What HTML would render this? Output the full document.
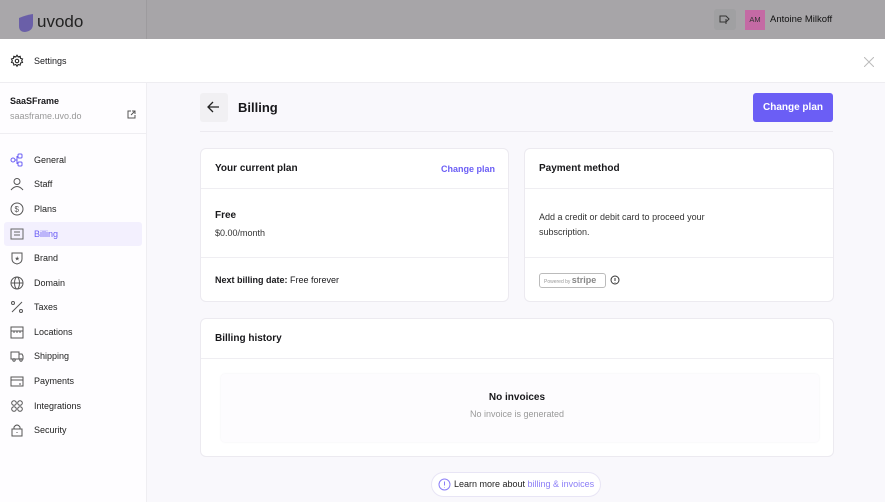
<!DOCTYPE html>
<html><head><meta charset="utf-8">
<style>
*{box-sizing:border-box;margin:0;padding:0}
body{width:885px;height:502px;overflow:hidden;font-family:"Liberation Sans",sans-serif;background:#f9f8fc;position:relative;color:#18181b}
.a{position:absolute}
.top{left:0;top:0;width:885px;height:39px;background:#a7a5a8}
.logo{left:0;top:0;width:147px;height:39px;background:#a9a7aa;border-right:1px solid #9d9b9e}
.hdr{left:0;top:39px;width:885px;height:44px;background:#fff;border-bottom:1px solid #eeedf1}
.side{left:0;top:83px;width:147px;height:419px;background:#fefdff;border-right:1px solid #efeef2}
.nav{left:4px;width:138px;height:24px;font-size:9px;color:#222;line-height:24px;padding-left:30px;border-radius:3px}
.nav svg{position:absolute;left:6px;top:5px}
.card{background:#fff;border:1px solid #eceaf0;border-radius:6px}
.b{font-weight:bold}
</style></head><body>
<div class="a top"></div>
<div class="a logo">
<svg class="a" style="left:18px;top:14px" width="16" height="19" viewBox="0 0 16 19"><path d="M1 4 Q8 1 15 0 V10 Q15 17 7 18 Q1 18 1 12Z" fill="#6a5fa8"/></svg>
<div class="a" style="left:37px;top:12px;font-size:17px;color:#222">uvodo</div>
</div>
<div class="a" style="left:714px;top:9px;width:22px;height:21px;background:#a0a0a2;border-radius:3px"></div>
<svg class="a" style="left:719px;top:14px" width="12" height="11" viewBox="0 0 12 11"><path d="M1 2h6l3 3-3 3H1z M7 5v5" fill="none" stroke="#333" stroke-width="1"/></svg>
<div class="a" style="left:745px;top:10px;width:20px;height:20px;background:#c46aa4;font-size:7.5px;line-height:20px;text-align:center;color:#333">AM</div>
<div class="a" style="left:770px;top:14px;font-size:9.5px;color:#111">Antoine Milkoff</div>

<div class="a hdr"></div>
<svg class="a" style="left:10px;top:54px" width="14" height="14" viewBox="0 0 24 24" fill="none" stroke="#222" stroke-width="1.8"><circle cx="12" cy="12" r="3"/><path d="M12 2l2 3 3.5-1 .5 3.5 3.5 1-1.5 3 1.5 3-3.5 1-.5 3.5-3.5-1-2 3-2-3-3.5 1-.5-3.5-3.5-1 1.5-3-1.5-3 3.5-1 .5-3.5 3.5 1z"/></svg>
<div class="a" style="left:34px;top:56px;font-size:9px">Settings</div>
<svg class="a" style="left:864px;top:57px" width="10" height="10" viewBox="0 0 10 10"><path d="M0 0L10 10M10 0L0 10" stroke="#bbb" stroke-width="1"/></svg>

<div class="a side">
<div class="a b" style="left:10px;top:13px;font-size:9px">SaaSFrame</div>
<div class="a" style="left:10px;top:28px;font-size:9px;color:#999">saasframe.uvo.do</div>
<svg class="a" style="left:127px;top:27px" width="9" height="9" viewBox="0 0 9 9" fill="none" stroke="#555"><path d="M4 1H1v7h7V5M5 1h3v3M8 1L4 5"/></svg>
<div class="a" style="left:0;top:50px;width:147px;border-top:1px solid #efeef2"></div>
</div>
<div class="a nav" style="top:148px;color:#222"><svg width="14" height="14" viewBox="0 0 14 14" fill="none" stroke="#6b5ef5"><circle cx="3" cy="7" r="2"/><rect x="8" y="1" width="4" height="4" rx="1"/><rect x="8" y="9" width="4" height="4" rx="1"/><path d="M5 7h2M7 3v8"/></svg>General</div>
<div class="a nav" style="top:172px"><svg width="14" height="14" viewBox="0 0 14 14" fill="none" stroke="#555"><circle cx="7" cy="4.5" r="3"/><path d="M1 13q6-7 12 0"/></svg>Staff</div>
<div class="a nav" style="top:197px"><svg width="14" height="14" viewBox="0 0 14 14" fill="none" stroke="#555"><circle cx="7" cy="7" r="6"/><text x="4.5" y="10" font-size="8" fill="#555" stroke="none">$</text></svg>Plans</div>
<div class="a nav" style="top:222px;background:#f3f0fe;color:#6b5ef5"><svg width="14" height="14" viewBox="0 0 14 14" fill="none" stroke="#666"><rect x="1" y="2" width="12" height="10"/><path d="M4 5h6M4 8h6"/></svg>Billing</div>
<div class="a nav" style="top:246px"><svg width="14" height="14" viewBox="0 0 14 14" fill="none" stroke="#555"><path d="M2 2h10v6q0 4-5 5-5-1-5-5z"/><text x="4.5" y="9.5" font-size="6" fill="#555" stroke="none">★</text></svg>Brand</div>
<div class="a nav" style="top:271px"><svg width="14" height="14" viewBox="0 0 14 14" fill="none" stroke="#555"><circle cx="7" cy="7" r="6"/><ellipse cx="7" cy="7" rx="2.5" ry="6"/><path d="M1 7h12"/></svg>Domain</div>
<div class="a nav" style="top:295px"><svg width="14" height="14" viewBox="0 0 14 14" fill="none" stroke="#555"><path d="M12 2L2 12"/><circle cx="3" cy="3" r="1.5"/><circle cx="11" cy="11" r="1.5"/></svg>Taxes</div>
<div class="a nav" style="top:320px"><svg width="14" height="14" viewBox="0 0 14 14" fill="none" stroke="#555"><rect x="1" y="2" width="12" height="11"/><path d="M1 6h12M4 6v2M7 6v2M10 6v2"/></svg>Locations</div>
<div class="a nav" style="top:344px"><svg width="14" height="14" viewBox="0 0 14 14" fill="none" stroke="#555"><rect x="1" y="3" width="8" height="7"/><path d="M9 5h3l1 2v3H9"/><circle cx="4" cy="11" r="1.2"/><circle cx="11" cy="11" r="1.2"/></svg>Shipping</div>
<div class="a nav" style="top:369px"><svg width="14" height="14" viewBox="0 0 14 14" fill="none" stroke="#555"><rect x="1" y="3" width="12" height="9"/><path d="M1 6h12M9 10h2"/></svg>Payments</div>
<div class="a nav" style="top:394px"><svg width="14" height="14" viewBox="0 0 14 14" fill="none" stroke="#555"><circle cx="4" cy="4" r="2.3"/><circle cx="10" cy="4" r="2.3"/><circle cx="4" cy="10" r="2.3"/><circle cx="10" cy="10" r="2.3"/></svg>Integrations</div>
<div class="a nav" style="top:418px"><svg width="14" height="14" viewBox="0 0 14 14" fill="none" stroke="#555"><rect x="2" y="6" width="10" height="7"/><path d="M4 6V4q3-4 6 0v2M7 9v1"/></svg>Security</div>

<div class="a" style="left:200px;top:93px;width:28px;height:29px;background:#f1f0f3;border-radius:3px"></div>
<svg class="a" style="left:207px;top:101px" width="13" height="12" viewBox="0 0 13 12" fill="none" stroke="#222" stroke-width="1.3"><path d="M12 6H1M6 1L1 6l5 5"/></svg>
<div class="a b" style="left:238px;top:100px;font-size:13px">Billing</div>
<div class="a" style="left:753px;top:93px;width:80px;height:29px;background:#6b5ef5;border-radius:3px;color:#fff;font-size:10px;font-weight:bold;text-align:center;line-height:29px">Change plan</div>
<div class="a" style="left:200px;top:131px;width:633px;border-top:1px solid #eceaf0"></div>

<div class="a card" style="left:200px;top:148px;width:309px;height:154px">
<div class="a b" style="left:14px;top:14px;font-size:10px">Your current plan</div>
<div class="a b" style="left:240px;top:15px;font-size:9px;color:#6b5ef5">Change plan</div>
<div class="a" style="left:0;top:39px;width:100%;border-top:1px solid #efeef2"></div>
<div class="a b" style="left:14px;top:61px;font-size:10px">Free</div>
<div class="a" style="left:14px;top:79px;font-size:9px;color:#333">$0.00/month</div>
<div class="a" style="left:0;top:108px;width:100%;border-top:1px solid #efeef2"></div>
<div class="a" style="left:14px;top:126px;font-size:9px"><b>Next billing date:</b> Free forever</div>
</div>

<div class="a card" style="left:524px;top:148px;width:310px;height:154px">
<div class="a b" style="left:14px;top:14px;font-size:10px">Payment method</div>
<div class="a" style="left:0;top:39px;width:100%;border-top:1px solid #efeef2"></div>
<div class="a" style="left:14px;top:61px;font-size:9px;color:#333;line-height:15px;width:210px">Add a credit or debit card to proceed your subscription.</div>
<div class="a" style="left:0;top:108px;width:100%;border-top:1px solid #efeef2"></div>
<div class="a" style="left:14px;top:124px;width:67px;height:15px;border:1px solid #bbb;border-radius:3px;font-size:5px;color:#999;line-height:13px;padding-left:4px">Powered by <b style="font-size:9px;color:#888">stripe</b></div>
<svg class="a" style="left:85px;top:126px" width="10" height="10" viewBox="0 0 10 10" fill="none" stroke="#333"><circle cx="5" cy="5" r="4"/><path d="M5 3v3M5 7v.5"/></svg>
</div>

<div class="a card" style="left:200px;top:318px;width:634px;height:139px">
<div class="a b" style="left:14px;top:14px;font-size:10px">Billing history</div>
<div class="a" style="left:0;top:39px;width:100%;border-top:1px solid #efeef2"></div>
<div class="a" style="left:20px;top:55px;width:598px;height:68px;background:#fdfcfe;border-radius:4px;box-shadow:0 0 2px #f0eff3"></div>
<div class="a b" style="left:0;top:73px;width:100%;text-align:center;font-size:10px">No invoices</div>
<div class="a" style="left:0;top:90px;width:100%;text-align:center;font-size:9px;color:#999">No invoice is generated</div>
</div>

<div class="a" style="left:431px;top:472px;width:170px;height:25px;background:#fff;border:1px solid #e8e5f5;border-radius:13px;font-size:9px;line-height:23px;padding-left:22px;color:#222">Learn more about <span style="color:#8b7ef7">billing &amp; invoices</span></div>
<svg class="a" style="left:438px;top:478px" width="13" height="13" viewBox="0 0 13 13" fill="none" stroke="#8b7ef7"><circle cx="6.5" cy="6.5" r="5.5"/><path d="M6.5 3.5v4M6.5 9v.5"/></svg>
</body></html>
